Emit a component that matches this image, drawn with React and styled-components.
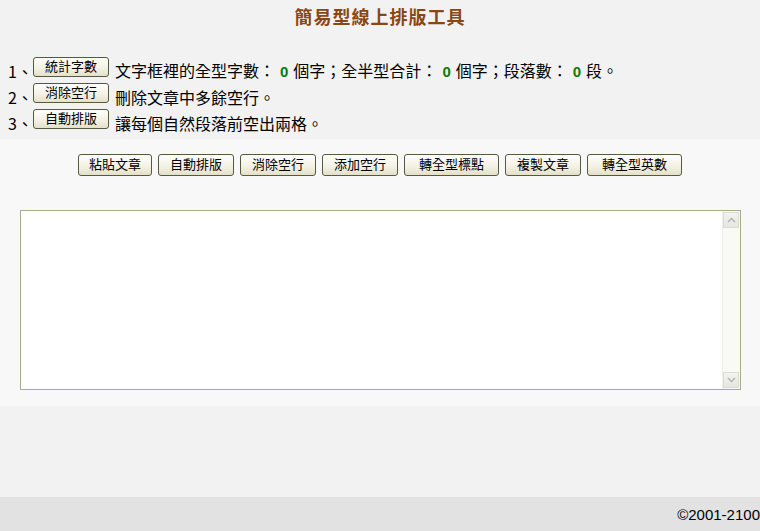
import React from "react";
import styled, { createGlobalStyle } from "styled-components";

const Global = createGlobalStyle`
  html, body { margin: 0; padding: 0; }
  body {
    background: #f2f2f2;
    font-family: "Noto Sans CJK TC", "Noto Sans", sans-serif;
    color: #000;
  }
`;

const Page = styled.div`
  min-height: 100vh;
  display: flex;
  flex-direction: column;
`;

const Header = styled.header`
  background: #f2f2f2;
  padding: 6px 0 3px 8px;
`;

const Title = styled.h1`
  margin: 0 0 32px -8px;
  text-align: center;
  font-size: 18px;
  line-height: 20px;
  font-weight: bold;
  color: #8a4712;
  letter-spacing: 1px;
`;

const Steps = styled.div`
  display: flex;
  flex-direction: column;
`;

const Step = styled.div`
  display: flex;
  align-items: center;
  height: 26px;
  font-size: 16px;
  white-space: nowrap;
`;

const StepNo = styled.span`
  width: 25px;
  line-height: 20px;
`;

const Btn = styled.button`
  box-sizing: border-box;
  width: ${(p) => p.$w || 76}px;
  height: ${(p) => p.$h || 22}px;
  padding: 0 0 3px;
  border: 1px solid #545a3c;
  border-radius: 3px;
  background: linear-gradient(#fefefb 0%, #f4f2e6 55%, #e4e0c8 100%);
  font-family: "Noto Sans CJK TC", "Noto Sans", sans-serif;
  font-size: 13px;
  line-height: 16px;
  color: #000;
  cursor: pointer;
  flex: none;
`;

const StepBtn = styled(Btn)`
  margin-bottom: 8px;
`;

const StepText = styled.span`
  margin-left: 6px;
  line-height: 20px;
`;

const Num = styled.b`
  color: #0b7a0b;
  font-family: "Liberation Sans", Arial, sans-serif;
  font-size: 15px;
  font-weight: bold;
  margin: 0 5px;
`;

const Workspace = styled.section`
  background: #f8f8f8;
  padding: 15px 19px 16px 20px;
  display: flex;
  flex-direction: column;
  gap: 34px;
`;

const Toolbar = styled.div`
  display: flex;
  justify-content: center;
  gap: 6px;
  margin-left: -1px;
`;

const Editor = styled.div`
  height: 180px;
  box-sizing: border-box;
  border: 1px solid #a7aa8b;
  background: #fff;
  display: flex;
`;

const Area = styled.textarea`
  flex: 1;
  border: 0;
  outline: none;
  resize: none;
  background: #fff;
  font-family: "Noto Sans CJK TC", sans-serif;
  font-size: 14px;
  padding: 2px;
`;

const Scrollbar = styled.div`
  width: 16px;
  display: flex;
  flex-direction: column;
  background: #f9f9f5;
  border-left: 1px solid #efefea;
  padding: 1px 1px 1px 0;
`;

const ScrollTrack = styled.div`
  flex: 1;
`;

const ScrollBtn = styled.div`
  height: 16px;
  background: linear-gradient(#f2f2ee, #e6e6e1);
  border: 1px solid #dcdcd6;
  box-sizing: border-box;
  display: flex;
  align-items: center;
  justify-content: center;
`;

const Filler = styled.div`
  flex: 1;
  background: #f2f2f2;
`;

const Footer = styled.footer`
  height: 34px;
  background: #e2e2e2;
  display: flex;
  align-items: center;
  justify-content: flex-end;
  font-family: "Liberation Sans", Arial, sans-serif;
  font-size: 15px;
  color: #000;
`;

const Chevron = ({ up }) => (
  <svg width="9" height="6" viewBox="0 0 9 6">
    <polyline
      points={up ? "1,5 4.5,1.5 8,5" : "1,1 4.5,4.5 8,1"}
      fill="none"
      stroke="#b4b4ae"
      strokeWidth="1.5"
    />
  </svg>
);

const tools = [
  ["粘貼文章", 74],
  ["自動排版", 76],
  ["消除空行", 76],
  ["添加空行", 76],
  ["轉全型標點", 95],
  ["複製文章", 76],
  ["轉全型英數", 95],
];

export default function App() {
  return (
    <Page>
      <Global />
      <Header>
        <Title>簡易型線上排版工具</Title>
        <Steps>
          <Step>
            <StepNo>1、</StepNo>
            <StepBtn $h={20}>統計字數</StepBtn>
            <StepText>
              文字框裡的全型字數：<Num>0</Num>個字；全半型合計：<Num>0</Num>個字；段落數：<Num>0</Num>段。
            </StepText>
          </Step>
          <Step>
            <StepNo>2、</StepNo>
            <StepBtn $h={20}>消除空行</StepBtn>
            <StepText>刪除文章中多餘空行。</StepText>
          </Step>
          <Step>
            <StepNo>3、</StepNo>
            <StepBtn $h={20}>自動排版</StepBtn>
            <StepText>讓每個自然段落前空出兩格。</StepText>
          </Step>
        </Steps>
      </Header>
      <Workspace>
        <Toolbar>
          {tools.map(([label, w]) => (
            <Btn key={label} $w={w}>
              {label}
            </Btn>
          ))}
        </Toolbar>
        <Editor>
          <Area />
          <Scrollbar>
            <ScrollBtn>
              <Chevron up />
            </ScrollBtn>
            <ScrollTrack />
            <ScrollBtn>
              <Chevron />
            </ScrollBtn>
          </Scrollbar>
        </Editor>
      </Workspace>
      <Filler />
      <Footer>©2001-2100</Footer>
    </Page>
  );
}
